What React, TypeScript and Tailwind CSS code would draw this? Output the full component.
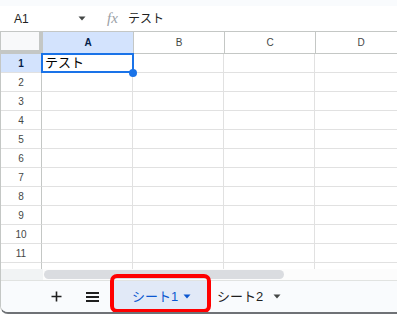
const cols = ["A", "B", "C", "D"];
const rows = [1, 2, 3, 4, 5, 6, 7, 8, 9, 10, 11];

const font = { fontFamily: '"Liberation Sans", "Noto Sans CJK JP", sans-serif' };

const Caret = ({ color = "#444746" }: { color?: string }) => (
  <svg width="8" height="5" viewBox="0 0 8 5">
    <path d="M0.5 0.5 L7.5 0.5 L4 4.5 Z" fill={color} />
  </svg>
);

export default function App() {
  return (
    <div className="w-[397px] h-[314px] overflow-hidden bg-white flex flex-col" style={font}>
      <div className="h-[6px] bg-[#f9fbfd] shrink-0" />

      {/* formula bar */}
      <div className="h-[26px] shrink-0 flex items-center border-b border-[#c4c7c5] bg-white">
        <div className="w-[96px] flex items-center pl-[14px] text-[12px] text-[#1f1f1f]">
          <span className="w-[64px]">A1</span>
          <Caret />
        </div>
        <span
          className="ml-[11px] w-[21px] text-[15px] italic text-[#9aa0a6]"
          style={{ fontFamily: '"Liberation Serif", serif' }}
        >
          fx
        </span>
        <span className="text-[12px] text-[#1f1f1f]">テスト</span>
      </div>

      <div className="flex-1 flex flex-col border-l border-[#c4c7c5] border-b-2 border-b-[#6f7276] rounded-bl-[8px] overflow-hidden">
        {/* column header */}
        <div className="h-[22px] flex shrink-0">
          <div className="w-[42px] shrink-0 bg-[#f8f9fa] border-r-4 border-b-4 border-[#c4c7c5]" />
          {cols.map((c) => (
            <div
              key={c}
              className={
                c === "A"
                  ? "w-[91px] shrink-0 flex items-center justify-center border-r border-b border-[#c4c7c5] bg-[#d3e3fd] text-[10px] font-bold text-[#041e49]"
                  : "w-[91px] shrink-0 flex items-center justify-center border-r border-b border-[#c4c7c5] text-[10px] text-[#444746]"
              }
            >
              {c}
            </div>
          ))}
        </div>

        {/* rows */}
        {rows.map((r) => (
          <div key={r} className="h-[19px] flex shrink-0">
            <div
              className={
                r === 1
                  ? "w-[41px] shrink-0 flex items-center justify-center border-r border-b border-r-[#c4c7c5] border-b-[#e1e1e1] bg-[#d3e3fd] text-[10px] font-bold text-[#041e49]"
                  : "w-[41px] shrink-0 flex items-center justify-center border-r border-b border-r-[#c4c7c5] border-b-[#e1e1e1] text-[10px] text-[#444746]"
              }
            >
              {r}
            </div>
            {cols.map((c) => (
              <div key={c} className="relative w-[91px] shrink-0 border-r border-b border-[#e1e1e1]">
                {r === 1 && c === "A" && (
                  <>
                    <span className="absolute left-[3px] top-0 text-[13px] leading-[18px] text-black">テスト</span>
                    <div className="absolute z-10 -left-px -top-px right-[-2px] bottom-[-1px] border-2 border-[#1a73e8]" />
                    <div className="absolute z-20 right-[-5px] bottom-[-5px] w-[8px] h-[8px] rounded-full bg-[#1a73e8]" />
                  </>
                )}
              </div>
            ))}
          </div>
        ))}

        {/* partial row 12 */}
        <div className="h-[6px] flex shrink-0">
          <div className="w-[41px] shrink-0 border-r border-[#c4c7c5]" />
          {cols.map((c) => (
            <div key={c} className="w-[91px] shrink-0 border-r border-[#e1e1e1]" />
          ))}
        </div>

        {/* horizontal scrollbar */}
        <div className="h-[11px] flex shrink-0 items-center bg-[#fcfcfc]">
          <div className="w-[42px] h-full bg-[#f1f3f4] shrink-0" />
          <div className="ml-px w-[240px] h-[9px] rounded-full bg-[#dadce0]" />
        </div>

        {/* sheet bar */}
        <div className="flex-1 flex items-center border-t border-[#e1e3e1] bg-[#f9fbfd] pl-[43px] text-[13px]">
          <div className="w-[25px] flex justify-center">
            <svg width="11" height="11" viewBox="0 0 11 11">
              <path d="M5.5 0.5 V10.5 M0.5 5.5 H10.5" stroke="#1f1f1f" strokeWidth="1.6" />
            </svg>
          </div>
          <div className="ml-[11px] w-[25px] flex justify-center">
            <svg width="13" height="10" viewBox="0 0 13 10">
              <path d="M0 1 H13 M0 5 H13 M0 9 H13" stroke="#1f1f1f" strokeWidth="1.8" />
            </svg>
          </div>
          <div className="relative ml-[9px] w-[93px] h-full flex items-center bg-[#e1e9f7] pl-[18px] text-[#0b57d0]">
            <span className="w-[51px]">シート1</span>
            <Caret color="#0b57d0" />
            <div className="absolute -left-[4px] -right-[4px] -top-[7px] bottom-[-1px] border-4 border-[#ff0000] rounded-[7px]" />
          </div>
          <div className="ml-[10px] flex items-center text-[#1f1f1f]">
            <span className="w-[56px]">シート2</span>
            <Caret />
          </div>
        </div>
      </div>
    </div>
  );
}
